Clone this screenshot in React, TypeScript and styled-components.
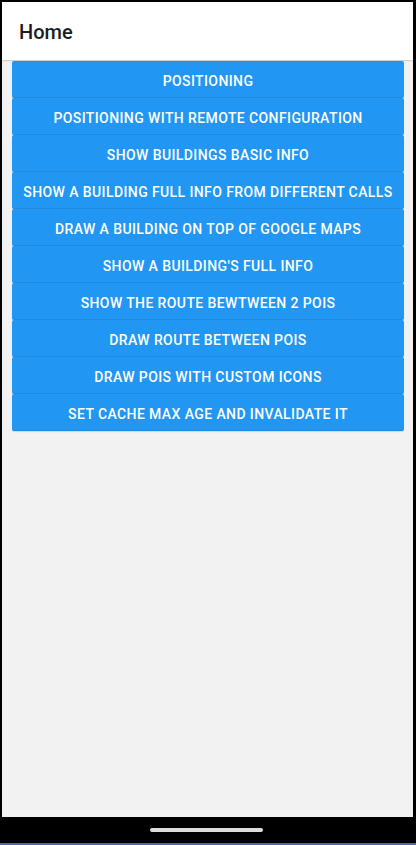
import React from "react";
import styled, { createGlobalStyle } from "styled-components";

const GlobalStyle = createGlobalStyle`
  html, body {
    margin: 0;
    padding: 0;
    background: #000;
    height: 100%;
  }
  #root {
    height: 100%;
  }
  * { box-sizing: border-box; }
`;

const Frame = styled.div`
  height: 845px;
  width: 416px;
  display: flex;
  flex-direction: column;
  background: #000;
  padding: 2px 3px 0 2px;
  border-bottom: 2px solid #4d6c99;
  font-family: Roboto, "Liberation Sans", sans-serif;
`;

const Screen = styled.div`
  flex: 1;
  display: flex;
  flex-direction: column;
  background: #f2f2f2;
  min-height: 0;
`;

const Header = styled.header`
  height: 58px;
  background: #fff;
  display: flex;
  align-items: center;
  padding-left: 17px;
  box-shadow: 0 1px 1px rgba(0, 0, 0, 0.15);
  position: relative;
  z-index: 1;
`;

const Title = styled.h1`
  margin: 0;
  font-size: 20px;
  font-weight: 500;
  color: #1c1c1c;
  padding-top: 2px;
`;

const List = styled.div`
  flex: 1;
  display: flex;
  flex-direction: column;
  padding: 1px 9px 0 10px;
`;

const Button = styled.button`
  height: 37px;
  width: 100%;
  border: none;
  border-bottom: 1px solid rgba(0, 0, 0, 0.07);
  border-radius: 2px;
  background: #2196f3;
  color: #fff;
  font-family: Roboto, "Liberation Sans", sans-serif;
  font-size: 14px;
  font-weight: 500;
  letter-spacing: 0.4px;
  text-transform: uppercase;
  display: flex;
  align-items: center;
  justify-content: center;
  padding: 3px 0 0;
  box-shadow: 0 1px 1px rgba(0, 0, 0, 0.12);
  cursor: pointer;
`;

const NavBar = styled.div`
  height: 26px;
  background: #000;
  display: flex;
  align-items: center;
  justify-content: center;
`;

const Handle = styled.div`
  width: 113px;
  height: 4px;
  border-radius: 2px;
  background: #dcdcdc;
  margin-left: -2px;
`;

const items = [
  "Positioning",
  "Positioning with remote configuration",
  "Show buildings basic info",
  "Show a building full info from different calls",
  "Draw a building on top of google maps",
  "Show a building's full info",
  "Show the route bewtween 2 pois",
  "Draw route between pois",
  "Draw pois with custom icons",
  "Set cache max age and invalidate it",
];

export default function App() {
  return (
    <>
      <GlobalStyle />
      <Frame>
        <Screen>
          <Header>
            <Title>Home</Title>
          </Header>
          <List>
            {items.map((t) => (
              <Button key={t}>{t}</Button>
            ))}
          </List>
        </Screen>
        <NavBar>
          <Handle />
        </NavBar>
      </Frame>
    </>
  );
}
